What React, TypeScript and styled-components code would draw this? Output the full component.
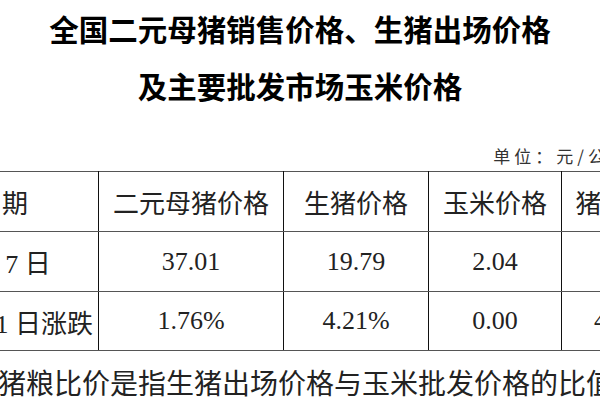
import styled, { createGlobalStyle } from "styled-components";

const GlobalStyle = createGlobalStyle`
  html, body {
    margin: 0;
    padding: 0;
    background: #fff;
  }
  body {
    overflow: hidden;
  }
`;

const Page = styled.div`
  width: 600px;
  height: 400px;
  overflow: hidden;
  color: #1a1a1a;
  font-family: "Noto Sans CJK SC", sans-serif;
`;

const Title = styled.h1`
  margin: 0;
  font-size: 29.5px;
  font-weight: 700;
  line-height: 57px;
  text-align: center;
  color: #000;
  white-space: nowrap;
`;

// the document is wider than the window, so the sheet is pulled left
const Sheet = styled.div`
  width: 788px;
  margin-left: -95px;
`;

const Unit = styled.div`
  margin: 30px 0 3px;
  padding-right: 63px;
  text-align: right;
  font-size: 17px;
  line-height: 24px;
  letter-spacing: 4px;
  color: #333;
  white-space: nowrap;
`;

const Table = styled.table`
  width: 788px;
  table-layout: fixed;
  border-collapse: collapse;
`;

const Row = styled.tr<{ $h: number }>`
  height: ${(p) => p.$h}px;
`;

const HeadCell = styled.th`
  padding: 0;
  border-top: 1px solid #555;
  border-bottom: 1px solid #555;
  border-left: 1px solid #111;
  border-right: 1px solid #111;
  font-family: "Noto Sans CJK SC", sans-serif;
  font-size: 26px;
  font-weight: 400;
  color: #222;
  text-align: center;
  white-space: nowrap;
`;

const Cell = styled.td`
  padding: 0;
  border-top: 1px solid #555;
  border-bottom: 1px solid #555;
  border-left: 1px solid #111;
  border-right: 1px solid #111;
  font-family: "Liberation Serif", "Noto Sans CJK SC", serif;
  font-size: 26px;
  color: #222;
  text-align: center;
  white-space: nowrap;
`;

const Note = styled.p`
  margin: 11px 0 0 -58px;
  font-size: 28px;
  line-height: 40px;
  color: #222;
  white-space: nowrap;
`;

const columns = [193, 185, 145, 133, 132];

const rows = [
  { label: "6 月 7 日", values: ["37.01", "19.79", "2.04", "9.70"], h: 60 },
  { label: "比 6 月 1 日涨跌", values: ["1.76%", "4.21%", "0.00", "4.20%"], h: 59 },
];

export default function App() {
  return (
    <Page>
      <GlobalStyle />
      <Title>
        全国二元母猪销售价格、生猪出场价格
        <br />
        及主要批发市场玉米价格
      </Title>
      <Sheet>
        <Unit>单位：元/公斤</Unit>
        <Table>
          <colgroup>
            {columns.map((w, i) => (
              <col key={i} style={{ width: w }} />
            ))}
          </colgroup>
          <tbody>
            <Row $h={60}>
              <HeadCell>日期</HeadCell>
              <HeadCell>二元母猪价格</HeadCell>
              <HeadCell>生猪价格</HeadCell>
              <HeadCell>玉米价格</HeadCell>
              <HeadCell>猪粮比价</HeadCell>
            </Row>
            {rows.map((r) => (
              <Row key={r.label} $h={r.h}>
                <Cell>{r.label}</Cell>
                {r.values.map((v, i) => (
                  <Cell key={i}>{v}</Cell>
                ))}
              </Row>
            ))}
          </tbody>
        </Table>
      </Sheet>
      <Note>注：猪粮比价是指生猪出场价格与玉米批发价格的比值。</Note>
    </Page>
  );
}
